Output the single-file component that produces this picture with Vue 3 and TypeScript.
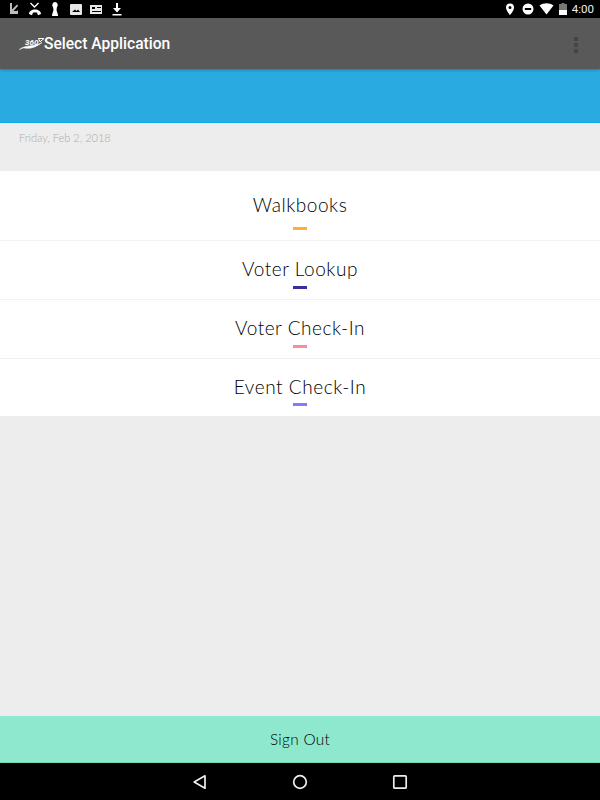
<template>
  <div class="screen">
    <div class="status-bar">
      <div class="status-left">
        <svg width="14" height="14" viewBox="0 0 14 14"><path d="M3 1h2v6.500L10 2.500l1.200 1.200L6.500 9H10l1-1v4H3z" fill="#bdbdbd" /></svg>
        <svg width="14" height="14" viewBox="0 0 14 14"><path d="M1 12c0-3 3-4.500 6-4.500s6 1.500 6 4.500l-3 1.200-1-2.700H5l-1 2.700z" fill="#fff" /><path d="M2.500 1l4 4 4-4" fill="none" stroke="#fff" stroke-width="1.400" /></svg>
        <svg width="14" height="14" viewBox="0 0 14 14"><path d="M7 0a3 3 0 0 1 2 5l-.5 3L10 13v1H4v-1l1.500-5L5 5a3 3 0 0 1 2-5z" fill="#fff" /></svg>
        <svg width="14" height="14" viewBox="0 0 14 14"><path fill-rule="evenodd" d="M2 2h10a1 1 0 0 1 1 1v9a1 1 0 0 1-1 1H2a1 1 0 0 1-1-1V3a1 1 0 0 1 1-1zm1 8h8L9 7.500 7.500 9 6 7.500z" fill="#e8e8e8" /></svg>
        <svg width="14" height="14" viewBox="0 0 14 14"><path fill-rule="evenodd" d="M1 3h12v9H1zm2 2v2h3V5zm5 0v1h4V5zm-5 4v1h9V9z" fill="#e8e8e8" /></svg>
        <svg width="14" height="14" viewBox="0 0 14 14"><path d="M6 1h2v5h3L7 10.500 3 6h3zM2.500 12h9v1.500h-9z" fill="#fff" /></svg>
      </div>
      <div class="status-right">
        <svg class="pin" width="12" height="14" viewBox="0 0 12 14"><path fill-rule="evenodd" d="M6 1.500a4 4 0 0 1 4 4C10 8.500 6 13 6 13S2 8.500 2 5.500a4 4 0 0 1 4-4zm0 2.500a1.500 1.500 0 1 0 0 3 1.500 1.500 0 0 0 0-3z" fill="#fff" /></svg>
        <svg width="12" height="14" viewBox="0 0 12 14"><path fill-rule="evenodd" d="M6 1.500a5.500 5.500 0 1 1 0 11 5.500 5.500 0 0 1 0-11zM2.800 6v2h6.400V6z" fill="#fff" /></svg>
        <svg width="15" height="14" viewBox="0 0 15 14"><path d="M.5 3.500C4.500.5 10.500.5 14.500 3.500L7.500 12.500z" fill="#fff" /></svg>
        <svg width="8" height="14" viewBox="0 0 8 14"><path d="M2.500 1h3v1H8v11H0V2h2.500z" fill="#777" /><path d="M0 8h8v5H0z" fill="#fff" /></svg>
        <span class="clock">4:00</span>
      </div>
    </div>

    <header class="toolbar">
      <svg class="logo" width="26" height="14" viewBox="0 0 26 14">
        <path d="M0.500 12.500C5 9.500 6 12 12 11C16 10.300 19 8.500 23 5.500C19 8 15 8.500 10 9C6 9.400 3 10.500 0.500 12.500z" fill="#fff" stroke="#fff" stroke-width="0.600" />
        <path d="M19.500 1.500h5.500L21 4.800z" fill="none" stroke="#fff" stroke-width="1" />
        <text x="6" y="7.500" class="logo-text">360</text>
      </svg>
      <span class="title">Select Application</span>
      <span class="spacer"></span>
      <div class="overflow"><i></i><i></i><i></i></div>
    </header>

    <div class="banner"></div>

    <main class="content">
      <p class="date">Friday, Feb 2, 2018</p>
      <ul class="apps">
        <li v-for="app in apps" :key="app.name" class="app">
          <span class="app-name">{{ app.name }}</span>
          <span class="dash" :style="{ background: app.color }"></span>
        </li>
      </ul>
    </main>

    <button class="sign-out">Sign Out</button>

    <nav class="nav-bar">
      <svg width="20" height="20" viewBox="0 0 20 20"><path d="M15 3.800v12.400L4.200 10z" fill="none" stroke="#eee" stroke-width="1.700" stroke-linejoin="round" /></svg>
      <svg width="20" height="20" viewBox="0 0 20 20"><circle cx="10" cy="10" r="6.300" fill="none" stroke="#eee" stroke-width="1.700" /></svg>
      <svg width="20" height="20" viewBox="0 0 20 20"><rect x="3.800" y="3.800" width="12.400" height="12.400" rx="1" fill="none" stroke="#eee" stroke-width="1.700" /></svg>
    </nav>
  </div>
</template>

<script setup lang="ts">
interface AppItem {
  name: string
  color: string
}

const apps: AppItem[] = [
  { name: 'Walkbooks', color: '#ffb02e' },
  { name: 'Voter Lookup', color: '#3b2f9e' },
  { name: 'Voter Check-In', color: '#f58f9a' },
  { name: 'Event Check-In', color: '#7f7bff' }
]
</script>

<style>
html,
body {
  margin: 0;
  background: #ededed;
}
</style>

<style scoped>
.screen {
  width: 600px;
  height: 800px;
  display: flex;
  flex-direction: column;
  overflow: hidden;
  background: #ededed;
  font-family: "Lato", "Open Sans", sans-serif;
  font-weight: 300;
}

.status-bar {
  height: 18px;
  flex: none;
  background: #000;
  display: flex;
  align-items: center;
  justify-content: space-between;
  padding: 0 6px 0 7px;
}

.status-left {
  display: flex;
  align-items: center;
  gap: 6.500px;
}

.status-right {
  display: flex;
  align-items: center;
  gap: 5px;
}

.status-bar svg {
  display: block;
}

.pin {
  margin-right: 1px;
}

.clock {
  font-family: "Roboto", sans-serif;
  font-size: 11.500px;
  font-weight: 400;
  color: #eee;
}

.toolbar {
  height: 51px;
  flex: none;
  box-sizing: border-box;
  background: #595959;
  display: flex;
  align-items: center;
  padding: 0 19px;
  position: relative;
  z-index: 1;
  box-shadow: 0 1px 3px rgba(0, 0, 0, 0.3);
}

.logo {
  margin-right: -1px;
  flex: none;
}

.logo-text {
  font-family: "Roboto", sans-serif;
  font-size: 8px;
  font-style: italic;
  font-weight: 700;
  fill: #fff;
}

.title {
  font-family: "Roboto", sans-serif;
  font-size: 15.600px;
  font-weight: 500;
  color: #fff;
}

.spacer {
  flex: 1;
}

.overflow {
  display: flex;
  flex-direction: column;
  gap: 2px;
  margin: 2px 3.500px 0 0;
}

.overflow i {
  width: 4px;
  height: 4px;
  background: #454545;
  display: block;
}

.banner {
  flex: none;
  height: 54px;
  box-sizing: border-box;
  background: #29abe2;
  border-bottom: 1px solid #10aee6;
}

.content {
  flex: 1;
  min-height: 0;
}

.date {
  margin: 0;
  padding: 8px 0 0 19px;
  height: 48px;
  box-sizing: border-box;
  font-size: 11px;
  color: #acacac;
}

.apps {
  list-style: none;
  margin: 0;
  padding: 0;
  background: #fff;
}

.app {
  display: flex;
  flex-direction: column;
  align-items: center;
  height: 59px;
  box-sizing: border-box;
  border-bottom: 1px solid #f2f2f2;
  padding-top: 15.500px;
}

.app:first-child {
  height: 70px;
  padding-top: 21.500px;
}

.app:last-child {
  height: 57px;
  border-bottom: 0;
}

.app-name {
  font-size: 19px;
  line-height: 23px;
  color: #000;
  letter-spacing: 0.55px;
}

.dash {
  width: 14px;
  height: 2.500px;
  margin-top: 6.500px;
}

.app:first-child .dash {
  margin-top: 11.500px;
}

.app:last-child .dash {
  margin-top: 5.500px;
}

.sign-out {
  height: 47px;
  flex: none;
  border: 0;
  border-bottom: 1px solid #78d2b6;
  padding: 0;
  background: #8de8cd;
  font-family: inherit;
  font-size: 15.400px;
  font-weight: 300;
  color: #000;
  letter-spacing: 0.3px;
}

.nav-bar {
  height: 37px;
  flex: none;
  background: #000;
  display: flex;
  align-items: center;
  justify-content: center;
  gap: 80px;
}
</style>
